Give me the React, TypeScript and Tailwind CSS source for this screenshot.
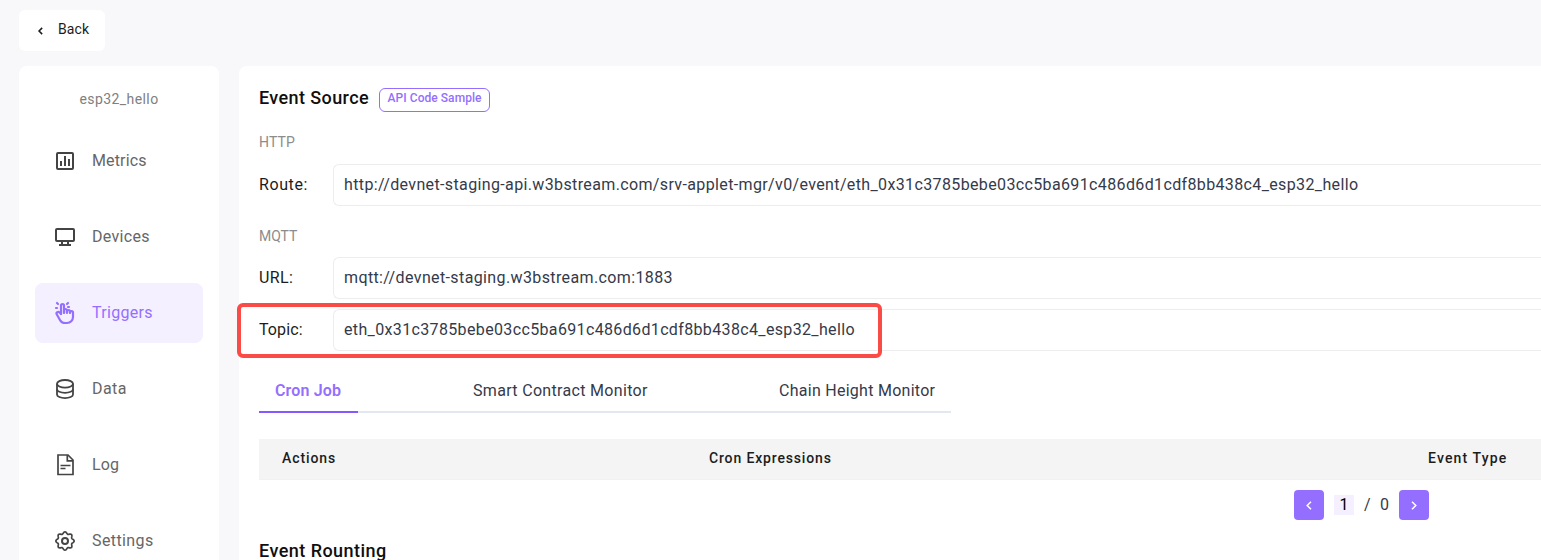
import type { ReactNode } from 'react';
import { TbHandClick } from 'react-icons/tb';

function MetricsIcon() {
  return (
    <svg width="18" height="18" viewBox="0 0 18 18" fill="none" stroke="currentColor" strokeWidth="2">
      <rect x="1" y="1" width="16" height="16" rx="1" />
      <path d="M5 9v5M9 4v10M13 7v7" />
    </svg>
  );
}

function DevicesIcon() {
  return (
    <svg width="20" height="18" viewBox="0 0 20 18" fill="none" stroke="currentColor" strokeWidth="2">
      <rect x="1" y="1" width="18" height="12" rx="1" />
      <path d="M7 13v4M13 13v4" />
      <path d="M4 17h12" />
    </svg>
  );
}

function DataIcon() {
  return (
    <svg width="18" height="20" viewBox="0 0 18 20" fill="none" stroke="currentColor" strokeWidth="1.8">
      <ellipse cx="9" cy="4.800" rx="8" ry="3.800" />
      <path d="M1 4.800v10.700c0 2 3.600 3.600 8 3.600s8-1.600 8-3.600V4.800" />
      <path d="M1 10.200c0 2 3.600 3.600 8 3.600s8-1.600 8-3.600" />
    </svg>
  );
}

function LogIcon() {
  return (
    <svg width="17" height="22" viewBox="0 0 17 22" fill="none" stroke="currentColor" strokeWidth="1.7">
      <path d="M1 1h10l5 5v14.500H1z" />
      <path d="M10.300 1v5.800H16" />
      <path d="M3.500 11.500h10M3.500 14.500h5" strokeWidth="1.500" />
    </svg>
  );
}

const gearOutline =
  Array.from({ length: 97 }, (_, i) => {
    const a = (i / 96) * Math.PI * 2;
    const r = 8.2 + 0.95 * Math.cos(8 * a);
    return `${i ? 'L' : 'M'}${(10 + r * Math.cos(a)).toFixed(2)} ${(10 + r * Math.sin(a)).toFixed(2)}`;
  }).join('') + 'Z';

function SettingsIcon() {
  return (
    <svg width="20" height="20" viewBox="0 0 20 20" fill="none" stroke="currentColor" strokeWidth="1.7" strokeLinejoin="round">
      <path d={gearOutline} />
      <circle cx="10" cy="10" r="3" strokeWidth="2" />
    </svg>
  );
}

function Chevron({ right = false, small = false }: { right?: boolean; small?: boolean }) {
  return (
    <svg width={small ? 5 : 6} height={small ? 8 : 9} viewBox="0 0 6 9" fill="none" stroke="currentColor" strokeWidth={small ? 1.9 : 1.5}>
      <path d={right ? 'M1 .7l3.800 3.800L1 8.300' : 'M5 .7L1.200 4.500 5 8.300'} />
    </svg>
  );
}

function NavItem({ icon, label, tracking, active = false }: { icon: ReactNode; label: string; tracking: string; active?: boolean }) {
  return (
    <a
      className={`flex h-[60px] shrink-0 items-center rounded-lg pl-[19px] ${
        active ? 'bg-[#f4f0ff] text-[#946fff]' : 'text-[#444]'
      }`}
    >
      <span className="flex w-[22px] justify-center">{icon}</span>
      <span className={`ml-4 text-base leading-6 ${tracking} ${active ? '' : 'text-[#666]'}`}>{label}</span>
    </a>
  );
}

function Field({ label, value, labelTracking, tracking }: { label: string; value: string; labelTracking: string; tracking: string }) {
  return (
    <div className="flex h-[42px] items-center">
      <span className={`w-[74px] shrink-0 text-base text-[#1c1c1c] ${labelTracking}`}>{label}</span>
      <div className={`flex h-[42px] flex-1 items-center rounded-l-md border border-r-0 border-[#ededed] pl-[10px] text-base whitespace-nowrap text-[#343a49] ${tracking}`}>
        {value}
      </div>
    </div>
  );
}

export default function App() {
  return (
    <div className="relative h-[560px] w-full overflow-hidden bg-[#f8f8fa] pt-[10px] pl-[19px] font-['Roboto',sans-serif]">
      <button className="flex h-[41px] w-[86px] items-center rounded-md bg-white pl-[19px] text-sm text-[#1c1c1c]">
        <Chevron small />
        <span className="-mt-[3px] ml-[15px] tracking-[0.08px]">Back</span>
      </button>

      <div className="mt-[15px] flex items-start gap-5">
        <nav className="flex h-[520px] w-[200px] shrink-0 flex-col gap-4 rounded-lg bg-white px-4">
          <div className="-mb-[1px] flex h-[50px] items-end justify-center pb-[7px] text-sm leading-5 tracking-[0.42px] text-[#808080]">
            esp32_hello
          </div>
          <NavItem icon={<MetricsIcon />} label="Metrics" tracking="tracking-[0.14px]" />
          <NavItem icon={<DevicesIcon />} label="Devices" tracking="tracking-[0.31px]" />
          <NavItem icon={<TbHandClick size={24} strokeWidth={2.2} className="-ml-px shrink-0" />} label="Triggers" tracking="tracking-[0.3px]" active />
          <NavItem icon={<DataIcon />} label="Data" tracking="tracking-[0.45px]" />
          <NavItem icon={<LogIcon />} label="Log" tracking="tracking-[0.14px]" />
          <NavItem icon={<SettingsIcon />} label="Settings" tracking="tracking-[0.4px]" />
        </nav>

        <main className="h-[520px] min-w-0 flex-1 rounded-tl-lg bg-white pl-5">
          <div className="flex h-[64px] items-center">
            <h1 className="text-lg font-medium tracking-[0.4px] text-[#0f0f0f]">Event Source</h1>
            <button className="mt-[4px] ml-[10px] flex h-6 w-[111px] justify-center rounded-md border border-[#946fff] text-xs leading-[18px] font-medium tracking-[0.05px] text-[#946fff]">
              API Code Sample
            </button>
          </div>

          <h2 className="flex h-[34px] items-center pb-[10px] text-sm tracking-[0.1px] text-[#8c8c8c]">HTTP</h2>
          <Field
            label="Route:"
            labelTracking="tracking-[0.6px]"
            value="http://devnet-staging-api.w3bstream.com/srv-applet-mgr/v0/event/eth_0x31c3785bebe03cc5ba691c486d6d1cdf8bb438c4_esp32_hello"
            tracking="tracking-[0.366px]"
          />

          <h2 className="flex h-[51px] items-center pt-[8px] text-sm tracking-[0.02px] text-[#8c8c8c]">MQTT</h2>
          <div className="flex flex-col gap-[10px]">
            <Field label="URL:" labelTracking="tracking-[0.42px]" value="mqtt://devnet-staging.w3bstream.com:1883" tracking="tracking-[0.38px]" />
            <Field
              label="Topic:"
              labelTracking="tracking-[0.1px]"
              value="eth_0x31c3785bebe03cc5ba691c486d6d1cdf8bb438c4_esp32_hello"
              tracking="tracking-[0.355px]"
            />
          </div>

          <div className="mt-[18px] flex h-11 w-[692px] text-base leading-[43px] text-[#343a49]">
            <div className="w-[99px] border-b-2 border-[#8559ff] pl-4 font-semibold tracking-[0.15px] text-[#946fff]">Cron Job</div>
            <div className="w-[306px] border-b-2 border-[#e2e8f0] pl-[115px] tracking-[0.32px] whitespace-nowrap">Smart Contract Monitor</div>
            <div className="w-[287px] border-b-2 border-[#e2e8f0] pl-[115px] tracking-[0.27px] whitespace-nowrap">Chain Height Monitor</div>
          </div>

          <div className="mt-[26px] flex h-[41px] border-b border-[#edf2f7] bg-[#f4f4f4] pl-[23px] text-sm leading-[39px] font-medium text-[#1c1c1c]">
            <div className="w-[427px] tracking-[0.9px]">Actions</div>
            <div className="w-[719px] tracking-[0.85px]">Cron Expressions</div>
            <div className="tracking-[1.15px] whitespace-nowrap">Event Type</div>
          </div>

          <div className="mt-[10px] ml-[1035px] flex h-[30px] items-center text-base text-[#343a49]">
            <button className="flex h-[30px] w-[30px] items-center justify-center rounded bg-[#946fff] text-white">
              <Chevron />
            </button>
            <span className="ml-[10px] flex h-5 w-5 items-center justify-center bg-[#f4f0ff] text-black">1</span>
            <span className="ml-[10px] w-4">/</span>
            <span className="w-[19px]">0</span>
            <button className="flex h-[30px] w-[30px] items-center justify-center rounded bg-[#946fff] text-white">
              <Chevron right />
            </button>
          </div>

          <h1 className="mt-[17px] text-lg font-medium tracking-[0.46px] text-[#0f0f0f]">Event Rounting</h1>
        </main>
      </div>

      <div className="absolute top-[303px] left-[237px] h-[55px] w-[645px] rounded-md border-4 border-[#fa4b46]" />
    </div>
  );
}
